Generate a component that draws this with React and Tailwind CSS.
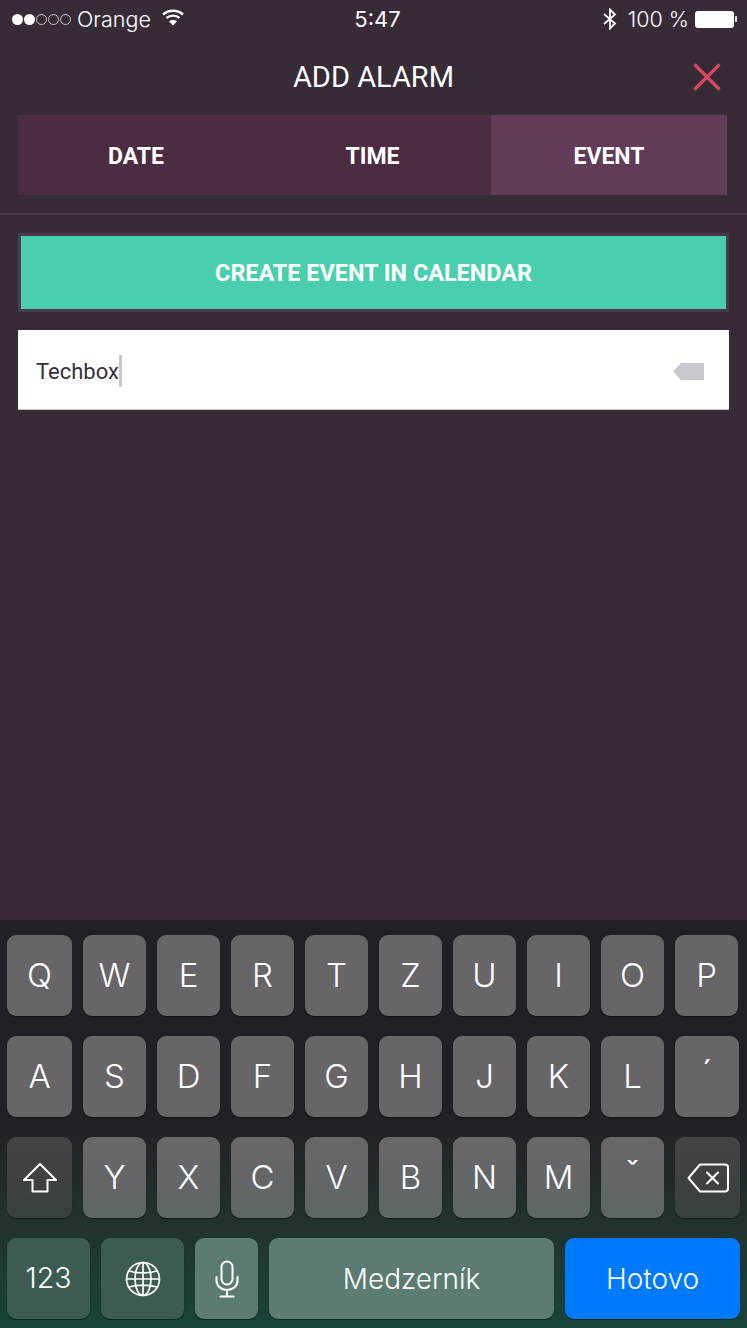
import React from 'react'

const sans = "font-['Inter','Roboto',sans-serif]"
const letterKey = 'bg-[#686569]'
const lowerKey = 'bg-gradient-to-b from-[#6a6669] to-[#5e6667]'
const darkKey = 'bg-gradient-to-b from-[#454246] to-[#384040]'

const Key = ({ label, width = 'w-[63px]', tone = letterKey, text = 'text-[33px]', children }) => (
  <div className={`${width} ${tone} ${text} h-[81px] shrink-0 rounded-[9px] flex items-center justify-center text-white font-light shadow-[0_1px_1px_rgba(0,0,0,0.45)]`}>
    {label}
    {children}
  </div>
)

const Wifi = () => (
  <svg width="24" height="18" viewBox="0 0 24 18" fill="none" stroke="white" strokeWidth="2.4">
    <path d="M2 6.500c5.600-5 14.400-5 20 0" />
    <path d="M5.500 10c3.700-3.200 9.300-3.200 13 0" />
    <path d="M12 17.500l-4-4.300c2.300-1.700 5.700-1.700 8 0z" fill="white" stroke="none" />
  </svg>
)

const Bluetooth = () => (
  <svg width="16" height="22" viewBox="0 0 16 22" fill="none" stroke="white" strokeWidth="1.800">
    <path d="M2 6l11 9.500L8 20.500V1.500l5 5L2 16" />
  </svg>
)

const ShiftIcon = () => (
  <svg width="36" height="32" viewBox="0 0 36 32" fill="none" stroke="white" strokeWidth="2" strokeLinejoin="round">
    <path d="M18 2L2 18h8.500v11.500h15V18H34z" />
  </svg>
)

const BackspaceIcon = () => (
  <svg width="42" height="30" viewBox="0 0 42 30" fill="none" stroke="white" strokeWidth="2" strokeLinejoin="round" strokeLinecap="round">
    <path d="M13 1.500h25a3 3 0 0 1 3 3v21a3 3 0 0 1-3 3H13L1.500 15z" />
    <path d="M20 9.500l11 11M31 9.500l-11 11" />
  </svg>
)

const GlobeIcon = () => (
  <svg width="36" height="36" viewBox="0 0 36 36" fill="none" stroke="white" strokeWidth="1.700">
    <circle cx="18" cy="18" r="16.500" />
    <ellipse cx="18" cy="18" rx="8" ry="16.500" />
    <path d="M18 1.500v33M1.500 18h33M4 10c8 2.500 20 2.500 28 0M4 26c8-2.500 20-2.500 28 0" />
  </svg>
)

const MicIcon = () => (
  <svg width="24" height="38" viewBox="0 0 24 38" fill="none" stroke="white" strokeWidth="2" strokeLinecap="round">
    <rect x="6.500" y="1.500" width="11" height="23" rx="5.500" />
    <path d="M1.500 17v3.500c0 5.500 4.500 9.500 10.500 9.500s10.500-4 10.500-9.500V17M12 30v6M5.500 36.500h13" />
  </svg>
)

export default function App() {
  return (
    <div className={`${sans} w-[747px] h-[1328px] overflow-hidden flex flex-col bg-[#362b37] text-white`}>
      {/* status bar */}
      <div className="h-[38px] grid grid-cols-3 items-center pl-[12px] pr-[10px]">
        <div className="flex items-center">
          <div className="flex items-center gap-[1px]">
            <span className="w-[11px] h-[11px] rounded-full bg-white" />
            <span className="w-[11px] h-[11px] rounded-full bg-white" />
            <span className="w-[11px] h-[11px] rounded-full border border-white/70" />
            <span className="w-[11px] h-[11px] rounded-full border border-white/70" />
            <span className="w-[11px] h-[11px] rounded-full border border-white/70" />
          </div>
          <span className="ml-[6px] text-[21.500px] font-light">Orange</span>
          <span className="ml-[10px] -mt-[4px]"><Wifi /></span>
        </div>
        <div className="pl-[6px] text-center text-[22px] font-normal">5:47</div>
        <div className="flex items-center justify-end">
          <Bluetooth />
          <span className="ml-[10px] text-[21.500px] font-light">100 %</span>
          <span className="ml-[6px] w-[39px] h-[17px] rounded-[3px] bg-white" />
          <span className="ml-[1px] w-[2px] h-[6px] bg-white/80" />
        </div>
      </div>

      {/* header */}
      <div className="h-[77px] grid grid-cols-[1fr_auto_1fr] items-center px-[26px]">
        <div />
        <div className="pt-[2px] text-[29px] font-normal font-['Roboto',sans-serif] leading-none">ADD ALARM</div>
        <div className="flex justify-end">
          <svg width="28" height="28" viewBox="0 0 28 28" stroke="#d9485f" strokeWidth="3.200">
            <path d="M1.500 1.500l25 25M26.500 1.500l-25 25" />
          </svg>
        </div>
      </div>

      {/* tabs */}
      <div className="mx-[18px] w-[709px] h-[80px] flex font-['Roboto',sans-serif] font-bold text-[23px] bg-[#4b2c41]">
        <div className="w-[236px] pt-[5px] flex items-center justify-center">DATE</div>
        <div className="w-[237px] pt-[5px] flex items-center justify-center">TIME</div>
        <div className="w-[236px] pt-[5px] flex items-center justify-center bg-[#613b58]">EVENT</div>
      </div>

      <div className="mt-[18px] h-[2px] bg-[#463a48]" />

      {/* create event */}
      <div className="mt-[18px] mx-[18px] w-[711px] h-[79px] pt-[3px] border-[3px] border-[#483c4c] bg-[#4acfae] flex items-center justify-center font-['Roboto',sans-serif] font-bold text-[23.400px]">
        CREATE EVENT IN CALENDAR
      </div>

      {/* input */}
      <div className="mt-[18px] mx-[18px] w-[711px] h-[80px] pt-[3px] bg-white border-b border-[#c9c9cc] flex items-center pl-[18px] pr-[25px] font-['Roboto',sans-serif] text-[22px] text-[#36303a]">
        <span>Techbox</span>
        <span className="w-[3px] h-[32px] bg-[#c7c7cd]" />
        <svg className="ml-auto" width="31" height="17" viewBox="0 0 31 17">
          <path d="M8 0h23v17H8L0 8.500z" fill="#c8c8ce" />
        </svg>
      </div>

      <div className="flex-1" />

      {/* keyboard */}
      <div className="h-[408px] shrink-0 pt-[15px] pl-[7px] flex flex-col gap-[20px] bg-gradient-to-b from-[#231f26] from-[48%] to-[#17443a] text-[33px]">
        <div className="flex gap-[11px]">
          <Key label="Q" width="w-[65px]" />
          {['W', 'E', 'R', 'T', 'Z', 'U', 'I', 'O', 'P'].map((k) => <Key key={k} label={k} />)}
        </div>
        <div className="flex gap-[11px]">
          <Key label="A" width="w-[65px]" />
          {['S', 'D', 'F', 'G', 'H', 'J', 'K', 'L'].map((k) => <Key key={k} label={k} />)}
          <Key width="w-[64px]"><span className="-mt-[8px] font-normal">´</span></Key>
        </div>
        <div className="flex gap-[11px]">
          <Key width="w-[65px]" tone={darkKey}><ShiftIcon /></Key>
          {['Y', 'X', 'C', 'V', 'B', 'N', 'M'].map((k) => <Key key={k} label={k} tone={lowerKey} />)}
          <Key tone={lowerKey}><span className="-mt-[8px] font-normal">ˇ</span></Key>
          <Key width="w-[65px]" tone={darkKey}><BackspaceIcon /></Key>
        </div>
        <div className="flex gap-[11px]">
          <Key label="123" width="w-[83px]" text="text-[28.500px]" tone="bg-[#3c5b53]" />
          <Key width="w-[83px]" tone="bg-[#3c5b53]"><GlobeIcon /></Key>
          <Key width="w-[63px]" tone="bg-[#5c7b72]"><MicIcon /></Key>
          <Key label="Medzerník" width="w-[285px]" text="text-[28px]" tone="bg-[#5c7b72]" />
          <Key label="Hotovo" width="w-[175px]" text="text-[28px]" tone="bg-[#007aff]" />
        </div>
      </div>
    </div>
  )
}
